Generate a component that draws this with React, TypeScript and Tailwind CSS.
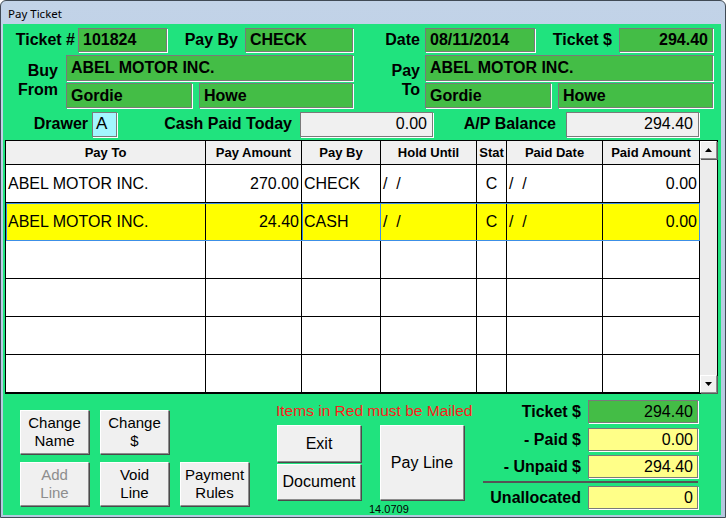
import type { ReactNode } from "react";

const font = "font-['Liberation_Sans',Arial,sans-serif]";

function Field({ className, children }: { className: string; children?: ReactNode }) {
  return (
    <div className={`flex items-center border border-[#7a7a7a] shadow-[1px_1px_0_#ffffff] whitespace-nowrap overflow-hidden ${className}`}>
      {children}
    </div>
  );
}

function Btn({ className, children }: { className: string; children: ReactNode }) {
  return (
    <div
      className={`flex flex-col items-center justify-center bg-[#f0f0f0] border border-t-white border-l-white border-r-[#8c8c8c] border-b-[#8c8c8c] shadow-[1px_1px_0_#4a4a4a] text-[15px] leading-[18px] text-center ${className}`}
    >
      {children}
    </div>
  );
}

function Tri({ up }: { up: boolean }) {
  return (
    <svg width="7" height="4" viewBox="0 0 7 4">
      <path d={up ? "M3.5 0L7 4H0z" : "M0 0H7L3.5 4z"} fill="#000" />
    </svg>
  );
}

const cols = [
  { key: "payTo", label: "Pay To", w: "w-[200px]", align: "justify-start pl-[2px]" },
  { key: "amt", label: "Pay Amount", w: "w-[96px]", align: "justify-end pr-[2px]" },
  { key: "by", label: "Pay By", w: "w-[79px]", align: "justify-start pl-[2px]" },
  { key: "hold", label: "Hold Until", w: "w-[96px]", align: "justify-start pl-[2px]" },
  { key: "stat", label: "Stat", w: "w-[30px]", align: "justify-center" },
  { key: "paidDate", label: "Paid Date", w: "w-[96px]", align: "justify-start pl-[2px]" },
  { key: "paidAmt", label: "Paid Amount", w: "w-[97px]", align: "justify-end pr-[2px]" },
] as const;

type Row = Record<(typeof cols)[number]["key"], string> & { selected?: boolean };

const empty: Row = { payTo: "", amt: "", by: "", hold: "", stat: "", paidDate: "", paidAmt: "" };

const rows: Row[] = [
  { payTo: "ABEL MOTOR INC.", amt: "270.00", by: "CHECK", hold: "/  /", stat: "C", paidDate: "/  /", paidAmt: "0.00" },
  { payTo: "ABEL MOTOR INC.", amt: "24.40", by: "CASH", hold: "/  /", stat: "C", paidDate: "/  /", paidAmt: "0.00", selected: true },
  empty,
  empty,
  empty,
  empty,
];

const green = "bg-[#44bd46]";

export default function App() {
  return (
    <div className={`w-[726px] h-[518px] overflow-hidden bg-white text-black ${font}`}>
      <div className="h-full flex flex-col rounded-t-[6px] border border-[#404a55] bg-gradient-to-b from-[#c2d3e8] to-[#b3c8df]">
        {/* title bar */}
        <div className="h-[23px] flex items-center pl-[7px] pt-[2px] text-[11.5px] font-['Noto_Sans',sans-serif] text-[#000]">
          Pay Ticket
        </div>

        {/* body */}
        <div className="flex-1 ml-[2px] mr-[4px] mb-[2px] bg-[#20e37e] flex flex-col">
          {/* row 1 */}
          <div className="flex items-center h-[24px] mt-[4px] text-[16px] font-bold">
            <div className="w-[72px] text-right">Ticket #</div>
            <Field className={`ml-[3px] w-[89px] h-[24px] pl-[4px] ${green}`}>101824</Field>
            <div className="w-[71px] text-right">Pay By</div>
            <Field className={`ml-[7px] w-[108px] h-[24px] pl-[4px] ${green}`}>CHECK</Field>
            <div className="w-[67px] text-right">Date</div>
            <Field className={`ml-[5px] w-[110px] h-[24px] pl-[4px] ${green}`}>08/11/2014</Field>
            <div className="w-[77px] text-right">Ticket $</div>
            <Field className={`ml-[7px] w-[94px] h-[24px] justify-end pr-[4px] ${green}`}>294.40</Field>
          </div>

          {/* buy from / pay to */}
          <div className="flex mt-[3px] text-[16px] font-bold">
            <div className="w-[55px] flex flex-col items-end pt-[6px] leading-[19px]">
              <span>Buy</span>
              <span>From</span>
            </div>
            <div className="ml-[8px] w-[287px] flex flex-col gap-[2px]">
              <Field className={`h-[26px] pl-[4px] ${green}`}>ABEL MOTOR INC.</Field>
              <div className="flex gap-[7px]">
                <Field className={`w-[126px] h-[25px] pl-[4px] ${green}`}>Gordie</Field>
                <Field className={`flex-1 h-[25px] pl-[4px] ${green}`}>Howe</Field>
              </div>
            </div>
            <div className="w-[67px] flex flex-col items-end pt-[6px] leading-[19px]">
              <span>Pay</span>
              <span>To</span>
            </div>
            <div className="ml-[5px] w-[288px] flex flex-col gap-[2px]">
              <Field className={`h-[26px] pl-[4px] ${green}`}>ABEL MOTOR INC.</Field>
              <div className="flex gap-[7px]">
                <Field className={`w-[126px] h-[25px] pl-[4px] ${green}`}>Gordie</Field>
                <Field className={`flex-1 h-[25px] pl-[4px] ${green}`}>Howe</Field>
              </div>
            </div>
          </div>

          {/* drawer / cash / balance */}
          <div className="flex items-center h-[26px] mt-[3px] text-[16px]">
            <div className="w-[85px] text-right font-bold">Drawer</div>
            <Field className="ml-[4px] w-[25px] h-[25px] pl-[3px] bg-[#a3f6ff] text-[17px]">A</Field>
            <div className="w-[175px] text-right font-bold">Cash Paid Today</div>
            <Field className="ml-[8px] w-[133px] h-[25px] justify-end pr-[5px] bg-[#f0f0f0]">0.00</Field>
            <div className="w-[123px] text-right font-bold">A/P Balance</div>
            <Field className="ml-[10px] w-[133px] h-[25px] justify-end pr-[5px] bg-[#f0f0f0]">294.40</Field>
          </div>

          {/* grid */}
          <div className="mt-[3px] ml-[2px] w-[713px] h-[254px] border border-black flex bg-white">
            <div className="flex flex-col">
              <div className="flex h-[24px] bg-[#f0f0f0]">
                {cols.map((c) => (
                  <div
                    key={c.key}
                    className={`${c.w} flex items-center justify-center border-r border-b border-black text-[13px] font-bold`}
                  >
                    {c.label}
                  </div>
                ))}
              </div>
              {rows.map((r, i) => (
                <div
                  key={i}
                  className={`flex h-[38px] ${r.selected ? "bg-[#ffff00] outline outline-1 -outline-offset-1 outline-[#3c8fe6]" : ""}`}
                >
                  {cols.map((c) => (
                    <div
                      key={c.key}
                      className={`${c.w} flex items-center ${c.align} border-r border-b border-black text-[16px] whitespace-pre ${
                        r.selected && c.key === "by" ? "outline outline-1 -outline-offset-1 outline-[#3c8fe6]" : ""
                      }`}
                    >
                      {r[c.key]}
                    </div>
                  ))}
                </div>
              ))}
            </div>
            {/* scrollbar */}
            <div className="w-[17px] flex flex-col bg-[#ececec]">
              <div className="h-[18px] flex items-center justify-center bg-[#f0f0f0] border border-t-white border-l-white border-r-[#8c8c8c] border-b-[#8c8c8c] shadow-[1px_1px_0_#5a5a5a]">
                <Tri up />
              </div>
              <div className="mt-auto h-[18px] flex items-center justify-center bg-[#f0f0f0] border border-t-white border-l-white border-r-[#8c8c8c] border-b-[#8c8c8c] shadow-[1px_1px_0_#5a5a5a]">
                <Tri up={false} />
              </div>
            </div>
          </div>

          {/* bottom */}
          <div className="flex flex-1">
            <div className="pl-[17px] pt-[16px] grid grid-cols-[69px_69px_69px] grid-rows-[44px_44px] gap-x-[11px] gap-y-[8px]">
              <Btn className="">
                <span>Change</span>
                <span>Name</span>
              </Btn>
              <Btn className="">
                <span>Change</span>
                <span>$</span>
              </Btn>
              <div />
              <Btn className="text-[#8d8d8d]">
                <span>Add</span>
                <span>Line</span>
              </Btn>
              <Btn className="">
                <span>Void</span>
                <span>Line</span>
              </Btn>
              <Btn className="">
                <span>Payment</span>
                <span>Rules</span>
              </Btn>
            </div>

            <div className="ml-[27px] w-[207px] flex flex-col">
              <div className="mt-[8px] h-[17px] leading-[17px] text-[15.5px] text-[#ff1a1a] whitespace-nowrap">
                Items in Red must be Mailed
              </div>
              <div className="mt-[6px] flex">
                <div className="ml-[1px] w-[84px] flex flex-col gap-[2px]">
                  <Btn className="h-[37px] text-[16px]">Exit</Btn>
                  <Btn className="h-[36px] text-[16px]">Document</Btn>
                </div>
                <Btn className="ml-[19px] w-[84px] h-[75px] text-[16px]">Pay Line</Btn>
              </div>
              <div className="mt-[4px] ml-[93px] text-[11px] leading-[11px]">14.0709</div>
            </div>

            <div className="w-[215px] pt-[6px] flex flex-col text-[16px]">
              <div className="flex items-center h-[23px]">
                <div className="w-[98px] text-right font-bold">Ticket $</div>
                <Field className={`ml-[7px] w-[110px] h-[23px] justify-end pr-[4px] ${green}`}>294.40</Field>
              </div>
              <div className="flex items-center h-[23px] mt-[5px]">
                <div className="w-[98px] text-right font-bold">- Paid $</div>
                <Field className="ml-[7px] w-[110px] h-[23px] justify-end pr-[4px] bg-[#ffff88]">0.00</Field>
              </div>
              <div className="flex items-center h-[23px] mt-[4px]">
                <div className="w-[98px] text-right font-bold">- Unpaid $</div>
                <Field className="ml-[7px] w-[110px] h-[23px] justify-end pr-[4px] bg-[#ffff88]">294.40</Field>
              </div>
              <div className="mt-[3px] h-[2px] bg-[#555555]" />
              <div className="flex items-center h-[23px] mt-[3px]">
                <div className="w-[98px] text-right font-bold">Unallocated</div>
                <Field className="ml-[7px] w-[110px] h-[23px] justify-end pr-[4px] bg-[#ffff88]">0</Field>
              </div>
            </div>
          </div>
        </div>
      </div>
    </div>
  );
}
